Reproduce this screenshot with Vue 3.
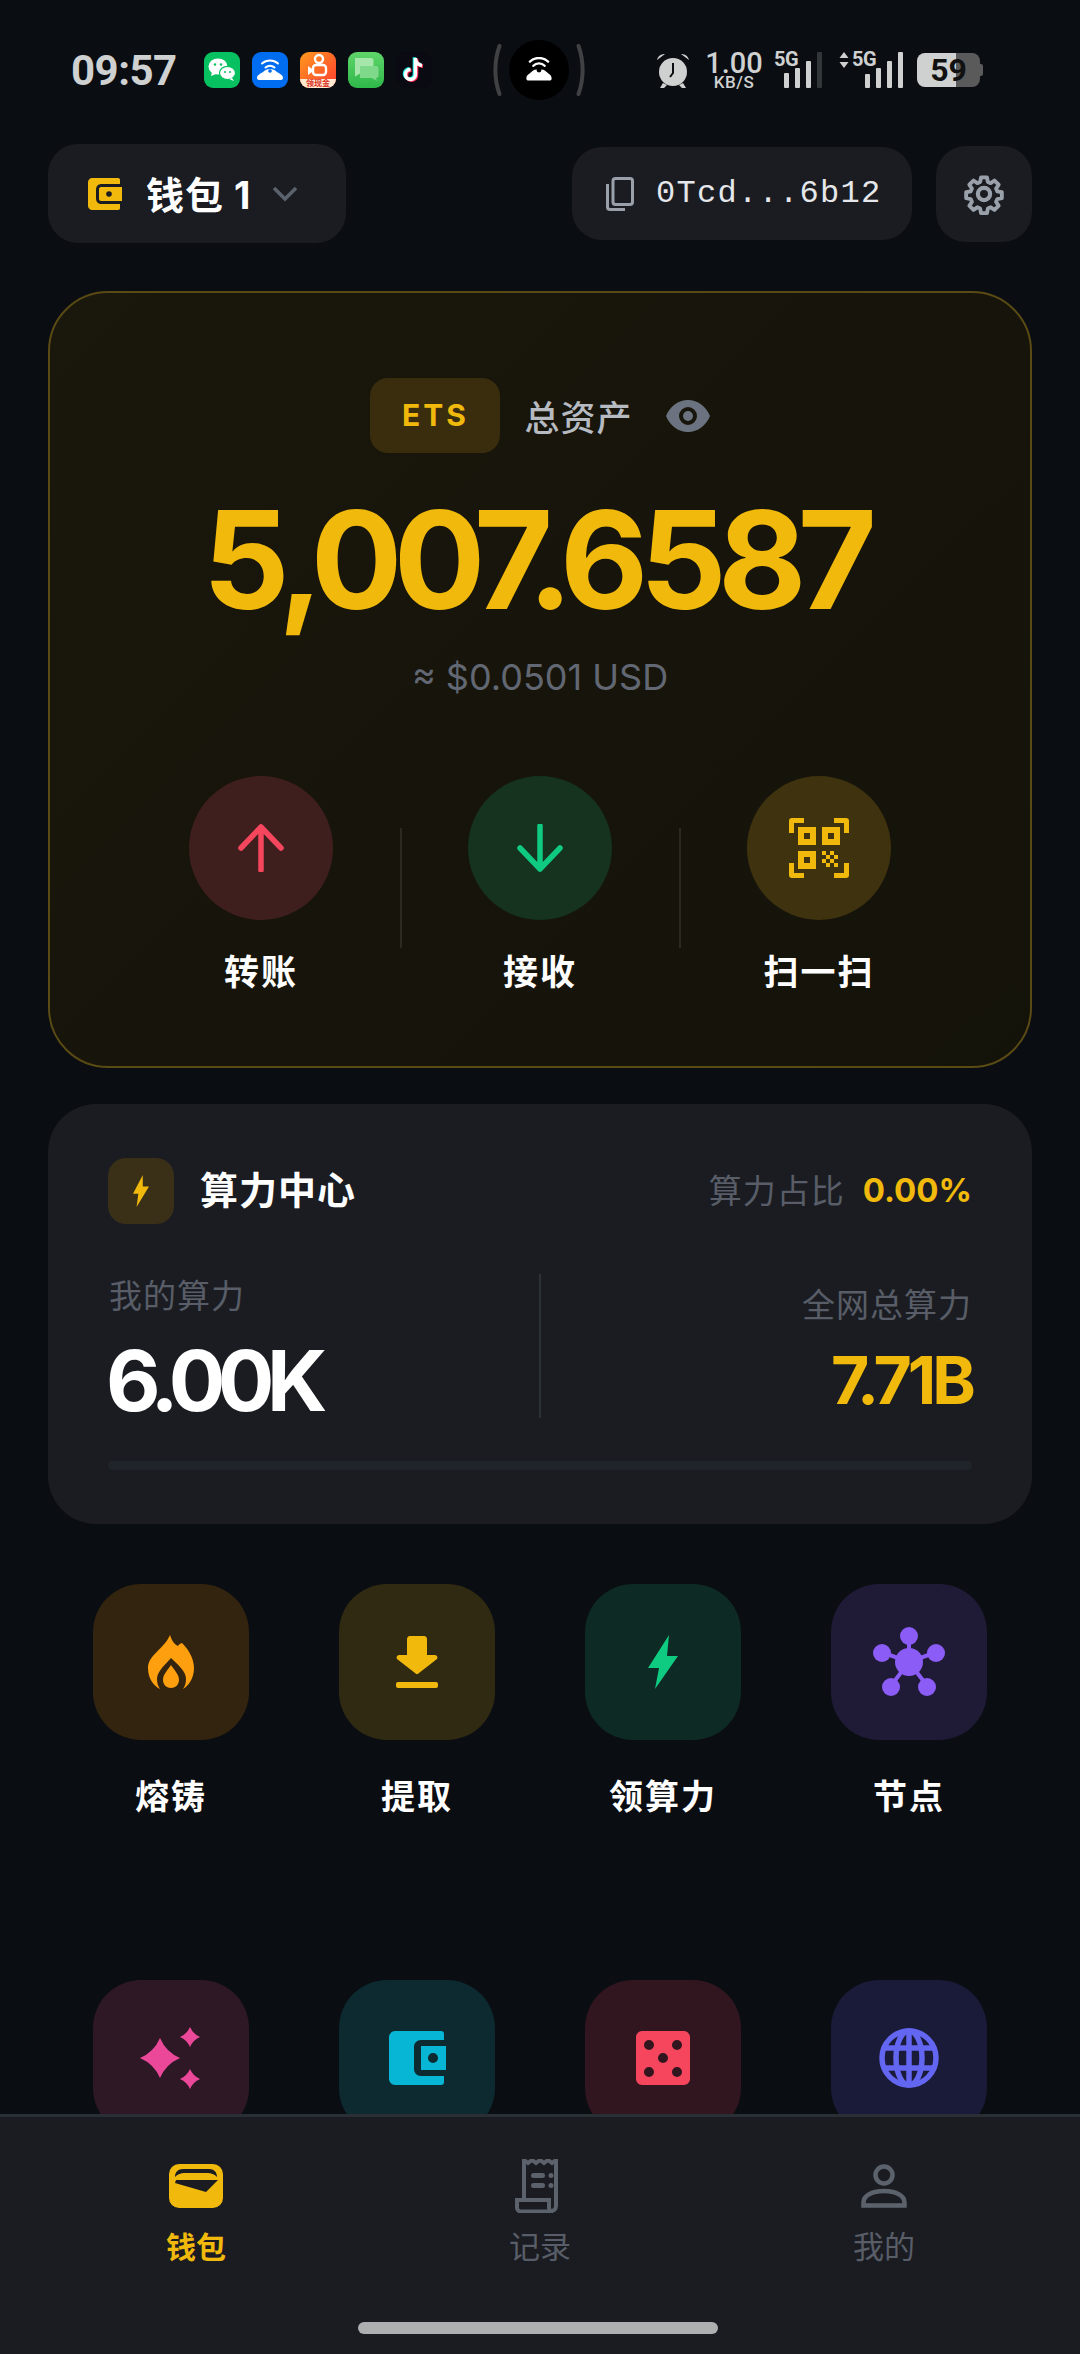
<template>
  <div class="page">
    <div class="status">
      <span class="time">09:57</span>
      <div class="apps">
        <span class="app wechat">
          <svg viewBox="0 0 36 36" width="36" height="36">
            <ellipse cx="14" cy="14.500" rx="9.500" ry="8" fill="#fff" />
            <path d="M8 20l-1 4 5-2z" fill="#fff" />
            <ellipse cx="23.500" cy="21" rx="8" ry="6.600" fill="#fff" stroke="#07c160" stroke-width="1.200" />
            <path d="M28 26l2 3-5-2z" fill="#fff" />
            <circle cx="11" cy="12.500" r="1.200" fill="#07c160" /><circle cx="17" cy="12.500" r="1.200" fill="#07c160" />
            <circle cx="21" cy="20" r="1" fill="#07c160" /><circle cx="26" cy="20" r="1" fill="#07c160" />
          </svg>
        </span>
        <span class="app blue">
          <svg viewBox="0 0 36 36" width="36" height="36">
            <path d="M5 26c0-3 3-4 6-6 2-2 4-3 7-3s5 1 7 3c3 2 6 3 6 6 0 1-1 2-2 2H7c-1 0-2-1-2-2z" fill="#fff" />
            <path d="M10 11.500a12 12 0 0 1 16 0M13.500 15.500a7 7 0 0 1 9 0" fill="none" stroke="#fff" stroke-width="2" stroke-linecap="round" />
            <circle cx="18" cy="19" r="1.800" fill="#006cf0" />
          </svg>
        </span>
        <span class="app kuai">
          <svg viewBox="0 0 36 28" width="36" height="28" class="kuai-svg">
            <circle cx="19" cy="7" r="4" fill="none" stroke="#fff" stroke-width="2.400" />
            <rect x="13" y="13" width="13" height="10" rx="3" fill="none" stroke="#fff" stroke-width="2.400" />
            <path d="M8 14l4 3v3l-4 3z" fill="#fff" />
          </svg>
          <span class="kuai-strip">领现金</span>
        </span>
        <span class="app msg">
          <svg viewBox="0 0 36 36" width="36" height="36">
            <path d="M7 6h16c1.500 0 2.500 1 2.500 2.500V19c0 1.500-1 2.500-2.500 2.500H12l-5 3z" fill="#a7e6ab" />
            <path d="M12 14h16c1.500 0 2.500 1 2.500 2.500v7c0 1.500-1 2.500-2.500 2.500h-.5l2 3-6-3H12z" fill="#7fd98a" />
          </svg>
        </span>
        <span class="app tiktok">
          <svg viewBox="0 0 36 36" width="36" height="36">
            <path d="M19.500 6v16.500a5 5 0 1 1-5-5M19.500 7c.5 3.500 3 6 6.500 6.500" fill="none" stroke="#25f4ee" stroke-width="3.600" transform="translate(-1 -.7)" />
            <path d="M19.500 6v16.500a5 5 0 1 1-5-5M19.500 7c.5 3.500 3 6 6.500 6.500" fill="none" stroke="#fe2c55" stroke-width="3.600" transform="translate(1 .7)" />
            <path d="M19.500 6v16.500a5 5 0 1 1-5-5M19.500 7c.5 3.500 3 6 6.500 6.500" fill="none" stroke="#fff" stroke-width="3.400" />
          </svg>
        </span>
      </div>
      <div class="island">
        <svg viewBox="0 0 10 54" width="10" height="54"><path d="M7.500 3C2 18 2 36 7.500 51" fill="none" stroke="#3f4143" stroke-width="4" stroke-linecap="round" /></svg>
        <span class="island-dot">
          <svg viewBox="0 0 40 36" width="28" height="26">
            <path d="M2 30c0-5 4-6 7-9 3-3 6-4 11-4s8 1 11 4 7 4 7 9c0 2-1 3-3 3H5c-2 0-3-1-3-3z" fill="#fff" />
            <path d="M7 6a19 19 0 0 1 26 0M12 12a11 11 0 0 1 16 0" fill="none" stroke="#fff" stroke-width="3.400" stroke-linecap="round" />
            <circle cx="20" cy="18" r="3.500" fill="#000" />
          </svg>
        </span>
        <svg viewBox="0 0 10 54" width="10" height="54"><path d="M2.500 3C8 18 8 36 2.500 51" fill="none" stroke="#3f4143" stroke-width="4" stroke-linecap="round" /></svg>
      </div>
      <div class="sys">
        <svg class="alarm" viewBox="0 0 36 40" width="36" height="40">
          <circle cx="18" cy="22" r="14" fill="#cfd1d1" />
          <path d="M2 10c1-4 4-6 8-6zM34 10c-1-4-4-6-8-6z" fill="#cfd1d1" />
          <path d="M8 33l-3 5h4l3-3zM28 33l3 5h-4l-3-3z" fill="#cfd1d1" />
          <path d="M18 13v10l-3 4" fill="none" stroke="#0a0d11" stroke-width="2" />
        </svg>
        <div class="speed"><span class="speed-num">1.00</span><span class="speed-unit">KB/S</span></div>
        <div class="signal first">
          <span class="five-g">5G</span>
          <i v-for="(h, n) in [15, 20, 27, 36]" :key="n" :class="{ off: n === 3 }" :style="{ height: h + 'px' }"></i>
        </div>
        <div class="signal second">
          <svg class="updown" viewBox="0 0 10 16" width="10" height="16"><path d="M5 0l4.500 6h-9zM5 16l4.500-6h-9z" fill="#cfd1d1" /></svg>
          <span class="five-g">5G</span>
          <i v-for="(h, n) in [14, 20, 27, 36]" :key="n" :style="{ height: h + 'px' }"></i>
        </div>
        <div class="battery"><span>59</span></div>
      </div>
    </div>

    <div class="header">
      <div class="wallet-pill">
        <svg viewBox="0 0 34 32" width="34" height="32">
          <path d="M4 0h26c1.500 0 2 1 2 2v4H14c-4 0-6 2-6 6v8c0 4 2 6 6 6h18v4c0 1-.5 2-2 2H4c-2 0-4-2-4-4V4c0-2 2-4 4-4z" fill="#f0b90b" />
          <path d="M13 9h21v14H13c-1 0-2-1-2-2v-10c0-1 1-2 2-2z" fill="#f0b90b" />
          <circle cx="21" cy="16" r="2.800" fill="#1a1c22" />
        </svg>
        <span class="wallet-name">钱包 1</span>
        <svg viewBox="0 0 26 16" width="26" height="16"><path d="M2 2l11 11L24 2" fill="none" stroke="#5c626c" stroke-width="3.600" /></svg>
      </div>
      <div class="header-right">
        <div class="addr-pill">
          <svg viewBox="0 0 28 34" width="28" height="34" class="copy">
            <rect x="7" y="1.500" width="19.500" height="26" rx="2.500" fill="none" stroke="#9aa0a9" stroke-width="3" />
            <path d="M1.500 7v23c0 1.500 1 2.500 2.500 2.500h15" fill="none" stroke="#9aa0a9" stroke-width="3" />
          </svg>
          <span class="addr">0Tcd...6b12</span>
        </div>
        <div class="gear-btn">
          <svg viewBox="0 0 24 24" width="42" height="42">
            <path d="M12 15.500a3.500 3.500 0 1 0 0-7 3.500 3.500 0 0 0 0 7z" fill="none" stroke="#9aa0a9" stroke-width="2.400" />
            <path d="M10.300 2.500h3.400l.5 2.600 1.600.7 2.200-1.500 2.400 2.400-1.500 2.200.7 1.600 2.600.5v3.400l-2.600.5-.7 1.600 1.500 2.200-2.400 2.400-2.200-1.500-1.600.7-.5 2.600h-3.400l-.5-2.600-1.600-.7-2.200 1.500-2.400-2.400 1.500-2.200-.7-1.600-2.600-.5v-3.400l2.600-.5.7-1.600-1.500-2.200 2.400-2.400 2.200 1.500 1.600-.7z" fill="none" stroke="#9aa0a9" stroke-width="2.200" stroke-linejoin="round" />
          </svg>
        </div>
      </div>
    </div>

    <div class="balance-card">
      <div class="balance-top">
        <span class="ets">ETS</span>
        <span class="total">总资产</span>
        <svg viewBox="0 0 44 32" width="44" height="32">
          <path fill-rule="evenodd" d="M22 0c10 0 18 6.500 22 16-4 9.500-12 16-22 16S4 25.500 0 16C4 6.500 12 0 22 0zm0 7a9 9 0 1 0 0 18 9 9 0 0 0 0-18zm0 4a5 5 0 1 1 0 10 5 5 0 0 1 0-10z" fill="#6b7280" />
        </svg>
      </div>
      <div class="balance">5,007.6587</div>
      <div class="usd"><span class="approx">≈</span> $0.0501 USD</div>
      <div class="actions">
        <div class="action">
          <span class="round red">
            <svg viewBox="0 0 46 48" width="46" height="48"><path d="M23 46V3M3 24L23 3l20 21" fill="none" stroke="#f6465d" stroke-width="5.500" stroke-linecap="round" stroke-linejoin="round" /></svg>
          </span>
          <span class="action-label">转账</span>
        </div>
        <span class="sep"></span>
        <div class="action">
          <span class="round green">
            <svg viewBox="0 0 46 48" width="46" height="48"><path d="M23 2v43M3 24l20 21 20-21" fill="none" stroke="#0ecb81" stroke-width="5.500" stroke-linecap="round" stroke-linejoin="round" /></svg>
          </span>
          <span class="action-label">接收</span>
        </div>
        <span class="sep"></span>
        <div class="action">
          <span class="round yellow">
            <svg viewBox="0 0 60 60" width="60" height="60" fill="#f0b90b">
              <path d="M0 3c0-2 1-3 3-3h12v5H5v10H0zM60 3c0-2-1-3-3-3H45v5h10v10h5zM0 57c0 2 1 3 3 3h12v-5H5V45H0zM60 57c0 2-1 3-3 3H45v-5h10V45h5z" />
              <path fill-rule="evenodd" d="M9 9h18v18H9zm6 6v6h6v-6zM33 9h18v18H33zm6 6v6h6v-6zM9 33h18v18H9zm6 6v6h6v-6z" />
              <path d="M33 33h4v4h-4zM41 33h4v4h-4zM37 37h4v4h-4zM45 37h4v4h-4zM33 41h4v4h-4zM41 41h4v4h-4zM37 45h4v4h-4zM45 45h4v4h-4z" />
            </svg>
          </span>
          <span class="action-label">扫一扫</span>
        </div>
      </div>
    </div>

    <div class="hash-card">
      <div class="hash-head">
        <span class="hash-icon">
          <svg viewBox="0 0 20 36" width="18" height="32"><path d="M12 0L1 21h6L5 36 19 13h-7z" fill="#f0b90b" /></svg>
        </span>
        <span class="hash-title">算力中心</span>
        <span class="ratio">算力占比</span>
        <span class="ratio-val">0.00%</span>
      </div>
      <div class="hash-stats">
        <div class="stat-left">
          <div class="stat-label">我的算力</div>
          <div class="mine">6.00K</div>
        </div>
        <span class="stat-sep"></span>
        <div class="stat-right">
          <div class="stat-label">全网总算力</div>
          <div class="network">7.71B</div>
        </div>
      </div>
      <div class="progress"></div>
    </div>

    <div class="tiles">
      <div class="tile" v-for="t in tiles" :key="t.name">
        <span class="tile-icon" :style="{ background: t.bg }">
          <svg v-if="t.name === '熔铸'" viewBox="0 0 48 54" width="48" height="54">
            <path fill-rule="evenodd" d="M23 0c2 6 4 9 8 11 1-2 2-2 4-3 7 7 12 16 12 25 0 11-6 18-11 21 2-3 3-6 3-10 0-8-8-14-15-21-5 6-14 13-14 21 0 4 1 7 3 10C7 51 1 44 1 33 1 20 17 14 23 0z" fill="#fd9f0e" />
            <path d="M24 30c3 5 8 9 8 15 0 5-4 8-8 8s-8-3-8-8c0-6 5-10 8-15z" fill="#fd9f0e" />
          </svg>
          <svg v-else-if="t.name === '提取'" viewBox="0 0 42 52" width="42" height="52" fill="#f0b90b">
            <path d="M11 3c0-1.500 1-3 3-3h14c2 0 3 1.500 3 3v16h7c3 0 4 2 3 4L23 37c-1 1.500-3 1.500-4 0L1 23c-1-2 0-4 3-4h7z" />
            <rect y="46" width="42" height="6" rx="2" />
          </svg>
          <svg v-else-if="t.name === '领算力'" viewBox="0 0 30 54" width="30" height="54"><path d="M21 0L0 33h11L7 54l23-33H19z" fill="#0ecb81" /></svg>
          <svg v-else-if="t.name === '节点'" viewBox="0 0 72 70" width="72" height="70" fill="#8b5cf6">
            <path d="M36 10v25M8 25l28 10 28-10M17 60l19-25 19 25" stroke="#8b5cf6" stroke-width="4" fill="none" />
            <circle cx="36" cy="9" r="9" /><circle cx="9" cy="26" r="9" /><circle cx="63" cy="26" r="9" />
            <circle cx="18" cy="60" r="9" /><circle cx="54" cy="60" r="9" /><circle cx="36" cy="35" r="14" />
          </svg>
          <svg v-else-if="t.name === 'sparkle'" viewBox="0 0 62 62" width="62" height="62" fill="#ec4899">
            <path d="M20 11Q26 25 40 31 26 37 20 51 14 37 0 31 14 25 20 11z" />
            <path d="M50 0Q53 7 60 10 53 13 50 20 47 13 40 10 47 7 50 0z" />
            <path d="M50 42Q53 49 60 52 53 55 50 62 47 55 40 52 47 49 50 42z" />
          </svg>
          <svg v-else-if="t.name === 'wallet'" viewBox="0 0 57 54" width="57" height="54" fill="#06b6d4">
            <path d="M6 0h46c2 0 3 1 3 3v6H32c-4 0-7 3-7 7v22c0 4 3 7 7 7h23v6c0 2-1 3-3 3H6c-3 0-6-3-6-6V6c0-3 3-6 6-6z" />
            <path fill-rule="evenodd" d="M32 15h25v24H32zm12 7a5 5 0 1 0 0 10 5 5 0 0 0 0-10z" />
          </svg>
          <svg v-else-if="t.name === 'dice'" viewBox="0 0 54 54" width="54" height="54">
            <path fill-rule="evenodd" d="M6 0h42c3 0 6 3 6 6v42c0 3-3 6-6 6H6c-3 0-6-3-6-6V6c0-3 3-6 6-6zm7 9a5 5 0 1 0 0 10 5 5 0 0 0 0-10zm28 0a5 5 0 1 0 0 10 5 5 0 0 0 0-10zM27 22a5 5 0 1 0 0 10 5 5 0 0 0 0-10zM13 36a5 5 0 1 0 0 10 5 5 0 0 0 0-10zm28 0a5 5 0 1 0 0 10 5 5 0 0 0 0-10z" fill="#f6465d" />
          </svg>
          <svg v-else viewBox="0 0 60 60" width="60" height="60" fill="none" stroke="#6366f1" stroke-width="5.500">
            <circle cx="30" cy="30" r="27" />
            <ellipse cx="30" cy="30" rx="13" ry="27" />
            <path d="M5 20h50M5 40h50M30 3v54" />
          </svg>
        </span>
        <span class="tile-label">{{ t.label }}</span>
      </div>
    </div>

    <div class="nav">
      <div class="nav-item active">
        <svg viewBox="0 0 54 44" width="54" height="44" class="nav-icon">
          <rect width="54" height="44" rx="10" fill="#f0b90b" />
          <path d="M6 13c0-5 3-8 8-8h26c5 0 8 3 8 8-3-3-6-4-9-4H15c-3 0-6 1-9 4z" fill="#1a1c22" />
          <path d="M7 16l42 0-12 12-31-9z" fill="#1a1c22" />
        </svg>
        <span>钱包</span>
      </div>
      <div class="nav-item">
        <svg viewBox="0 0 50 54" width="50" height="54" class="nav-icon">
          <path d="M9 41V1l4 3 4-3 4 3 4-3 4 3 4-3 4 3 4-3 0 46c0 3-2 5-5 5" fill="none" stroke="#5c626c" stroke-width="4" />
          <path d="M2 41h32v8c0 2 2 3.500 4 3.500H6c-2 0-4-1.500-4-3.500z" fill="none" stroke="#5c626c" stroke-width="4" />
          <rect x="16" y="14" width="14" height="5" rx="2.500" fill="#5c626c" />
          <rect x="16" y="24" width="14" height="5" rx="2.500" fill="#5c626c" />
          <circle cx="36" cy="16.500" r="2.500" fill="#5c626c" /><circle cx="36" cy="26.500" r="2.500" fill="#5c626c" />
        </svg>
        <span>记录</span>
      </div>
      <div class="nav-item">
        <svg viewBox="0 0 46 44" width="46" height="44" class="nav-icon">
          <circle cx="23" cy="11" r="8.500" fill="none" stroke="#5c626c" stroke-width="4.500" />
          <path d="M2.500 41.500v-3C2.500 31 12 27 23 27s20.500 4 20.500 11.500v3z" fill="none" stroke="#5c626c" stroke-width="4.500" />
        </svg>
        <span>我的</span>
      </div>
      <span class="home-bar"></span>
    </div>
  </div>
</template>

<script setup>
const tiles = [
  { name: '熔铸', label: '熔铸', bg: '#33240f' },
  { name: '提取', label: '提取', bg: '#312a12' },
  { name: '领算力', label: '领算力', bg: '#0d2a24' },
  { name: '节点', label: '节点', bg: '#1f1b36' },
  { name: 'sparkle', label: '', bg: '#2f1826' },
  { name: 'wallet', label: '', bg: '#0c2a30' },
  { name: 'dice', label: '', bg: '#31161f' },
  { name: 'globe', label: '', bg: '#191b38' }
]
</script>

<style>
html, body {
  margin: 0;
  background: #0a0d11;
}
</style>

<style scoped>
.page {
  position: relative;
  width: 1080px;
  height: 2354px;
  overflow: hidden;
  box-sizing: border-box;
  padding: 30px 48px 0;
  background: #0a0d11;
  font-family: Inter, "Noto Sans CJK SC", sans-serif;
  color: #fff;
}

.status {
  display: flex;
  align-items: center;
  height: 80px;
  padding-left: 23px;
}

.time {
  width: 109px;
  font-family: Roboto, sans-serif;
  font-size: 42px;
  font-weight: 700;
  letter-spacing: -.5px;
  color: #cfd1d1;
}

.apps {
  display: flex;
  gap: 12px;
  margin-left: 24px;
}

.app {
  position: relative;
  display: block;
  width: 36px;
  height: 36px;
  border-radius: 9px;
  overflow: hidden;
}

.wechat { background: #07c160; }
.blue { background: #006cf0; }
.kuai { background: linear-gradient(135deg, #ff9a1e, #ff3b30); }
.msg { background: linear-gradient(#5fd56a, #2fb84a); }
.tiktok { background: #0a0a12; }

.kuai-svg {
  display: block;
}

.kuai-strip {
  position: absolute;
  left: 0;
  right: 0;
  bottom: 0;
  height: 9px;
  background: #ffe9d0;
  color: #d92c1c;
  font-size: 8px;
  font-weight: 700;
  line-height: 9px;
  text-align: center;
}

.island {
  display: flex;
  align-items: center;
  gap: 7px;
  margin-left: 60px;
}

.island-dot {
  display: flex;
  align-items: center;
  justify-content: center;
  width: 60px;
  height: 60px;
  border-radius: 50%;
  background: #000;
}

.sys {
  display: flex;
  align-items: center;
  margin-left: 69px;
  color: #cfd1d1;
}

.speed {
  display: flex;
  flex-direction: column;
  align-items: center;
  width: 54px;
  margin-left: 16px;
}

.speed-num {
  font-family: Roboto, sans-serif;
  font-size: 29px;
  font-weight: 500;
  line-height: 24px;
}

.speed-unit {
  font-family: Roboto, sans-serif;
  font-size: 17px;
  font-weight: 500;
  letter-spacing: .5px;
  line-height: 14px;
}

.signal {
  position: relative;
  display: flex;
  align-items: flex-end;
  gap: 6px;
  height: 36px;
}

.signal i {
  display: block;
  width: 5px;
  border-radius: 1px;
  background: #cfd1d1;
}

.signal i.off {
  background: #333638;
}

.first {
  margin-left: 23px;
}

.second {
  margin-left: 43px;
}

.five-g {
  position: absolute;
  left: -10px;
  top: -2px;
  font-family: Roboto, sans-serif;
  font-size: 20px;
  font-weight: 700;
  letter-spacing: -.5px;
  line-height: 18px;
}

.updown {
  position: absolute;
  left: -26px;
  top: 0;
}

.second .five-g {
  left: -13px;
}

.battery {
  position: relative;
  width: 63px;
  height: 34px;
  margin-left: 14px;
  border-radius: 8px;
  background: linear-gradient(90deg, #cfd1d1 62%, #5a5a5a 62%);
  color: #111;
  font-family: Roboto, sans-serif;
  font-size: 32px;
  font-weight: 700;
  line-height: 34px;
  text-align: center;
}

.battery::after {
  content: "";
  position: absolute;
  right: -3px;
  top: 11px;
  width: 3px;
  height: 12px;
  border-radius: 0 2px 2px 0;
  background: #5a5a5a;
}

.header {
  display: flex;
  align-items: center;
  justify-content: space-between;
  height: 99px;
  margin-top: 34px;
}

.wallet-pill {
  display: flex;
  align-items: center;
  width: 298px;
  height: 99px;
  box-sizing: border-box;
  padding-left: 40px;
  border-radius: 30px;
  background: #1a1c22;
}

.wallet-name {
  width: 126px;
  margin: 0 0 3px 24px;
  font-size: 38px;
  font-weight: 700;
  letter-spacing: 1px;
}

.header-right {
  display: flex;
  align-items: center;
  gap: 24px;
}

.addr-pill {
  display: flex;
  align-items: center;
  width: 340px;
  height: 93px;
  box-sizing: border-box;
  padding-left: 34px;
  border-radius: 30px;
  background: #1a1c22;
}

.addr {
  margin-left: 22px;
  font-family: "Liberation Mono", monospace;
  font-size: 32px;
  letter-spacing: 1.300px;
  color: #e5e7ea;
}

.gear-btn {
  display: flex;
  align-items: center;
  justify-content: center;
  width: 96px;
  height: 96px;
  border-radius: 30px;
  background: #1a1c22;
}

.balance-card {
  display: flex;
  flex-direction: column;
  align-items: center;
  height: 777px;
  box-sizing: border-box;
  margin-top: 48px;
  padding-top: 85px;
  border: 2px solid #5a4a14;
  border-radius: 60px;
  background: linear-gradient(135deg, #1a170c, #14130a);
}

.balance-top {
  display: flex;
  align-items: center;
  height: 75px;
}

.ets {
  width: 130px;
  height: 75px;
  border-radius: 18px;
  background: #3a2d0e;
  color: #f0b90b;
  font-size: 30px;
  font-weight: 700;
  letter-spacing: 3px;
  line-height: 75px;
  text-align: center;
}

.total {
  margin: 0 33px 0 24px;
  font-size: 35px;
  font-weight: 500;
  letter-spacing: 1px;
  color: #b6bac1;
}

.balance {
  margin: 27px 0 0 -9px;
  font-size: 136px;
  font-weight: 700;
  letter-spacing: -8.700px;
  line-height: 160px;
  color: #f0b90b;
}

.usd {
  margin-top: 15px;
  font-size: 36px;
  color: #626873;
  line-height: 44px;
}

.actions {
  display: flex;
  align-items: flex-start;
  justify-content: center;
  margin-top: 77px;
}

.action {
  display: flex;
  flex-direction: column;
  align-items: center;
  width: 277px;
}

.round {
  display: flex;
  align-items: center;
  justify-content: center;
  width: 144px;
  height: 144px;
  border-radius: 50%;
}

.red { background: #3f1f1e; }
.green { background: #16331f; }
.yellow { background: #3f320e; }

.action-label {
  margin-top: 29px;
  font-size: 35px;
  font-weight: 700;
  letter-spacing: 2px;
  line-height: 46px;
}

.sep {
  flex: none;
  width: 2px;
  height: 120px;
  margin-top: 52px;
  background: #2c2a1e;
}

.hash-card {
  height: 420px;
  box-sizing: border-box;
  margin-top: 36px;
  padding: 54px 60px 0;
  border-radius: 48px;
  background: #1a1c22;
}

.hash-head {
  display: flex;
  align-items: center;
  height: 66px;
}

.hash-icon {
  display: flex;
  align-items: center;
  justify-content: center;
  width: 66px;
  height: 66px;
  border-radius: 18px;
  background: #3a3018;
}

.hash-title {
  flex: 1;
  margin: 0 0 7px 26px;
  font-size: 38px;
  font-weight: 700;
  letter-spacing: 1px;
}

.ratio {
  margin-bottom: 5px;
  font-size: 33px;
  letter-spacing: 1px;
  color: #585d67;
}

.ratio-val {
  margin: 0 0 3px 18px;
  font-size: 33px;
  font-weight: 700;
  color: #f0b90b;
}

.hash-stats {
  display: flex;
  align-items: flex-start;
  margin-top: 50px;
  height: 126px;
}

.stat-left,
.stat-right {
  flex: 1;
}

.stat-left .stat-label {
  margin-left: 1px;
}

.stat-right {
  padding-top: 9px;
  text-align: right;
}

.stat-sep {
  width: 2px;
  height: 144px;
  background: #2c3037;
}

.stat-label {
  font-size: 33px;
  letter-spacing: 1px;
  line-height: 44px;
  color: #585d67;
}

.mine {
  margin-top: 18px;
  margin-left: -2px;
  font-size: 84px;
  font-weight: 700;
  letter-spacing: -7.500px;
  line-height: 90px;
}

.network {
  margin-top: 18px;
  font-size: 66px;
  font-weight: 700;
  letter-spacing: -4px;
  line-height: 70px;
  color: #f0b90b;
}

.progress {
  height: 9px;
  margin-top: 61px;
  border-radius: 5px;
  background: #1f242b;
}

.tiles {
  display: grid;
  grid-template-columns: repeat(4, 246px);
  row-gap: 158px;
  margin-top: 60px;
}

.tile {
  display: flex;
  flex-direction: column;
  align-items: center;
}

.tile-icon {
  display: flex;
  align-items: center;
  justify-content: center;
  width: 156px;
  height: 156px;
  border-radius: 48px;
}

.tile-label {
  height: 50px;
  margin-top: 32px;
  font-size: 34px;
  font-weight: 700;
  letter-spacing: 2px;
  line-height: 50px;
}

.nav {
  position: absolute;
  left: 0;
  right: 0;
  top: 2114px;
  bottom: 0;
  display: flex;
  justify-content: center;
  padding: 42px 24px 0;
  border-top: 3px solid #2a2e35;
  background: #1a1c22;
}

.nav-item {
  display: flex;
  flex-direction: column;
  align-items: center;
  width: 344px;
  color: #585d67;
  font-size: 31px;
  line-height: 44px;
}

.nav-item.active {
  color: #f0b90b;
  font-size: 30px;
  font-weight: 700;
}

.nav-icon {
  height: 54px;
  margin-bottom: 12px;
}

.home-bar {
  position: absolute;
  left: 358px;
  top: 205px;
  width: 360px;
  height: 12px;
  border-radius: 6px;
  background: #aeafb1;
}
</style>
